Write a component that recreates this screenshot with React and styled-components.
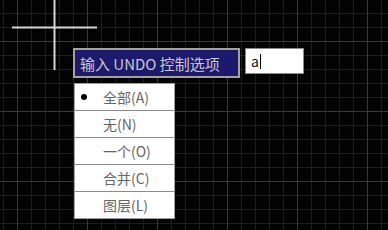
import React from 'react';
import styled, { createGlobalStyle } from 'styled-components';

const GlobalStyle = createGlobalStyle`
  html, body {
    margin: 0;
    padding: 0;
    background: #000;
  }
`;

const options = ['全部(A)', '无(N)', '一个(O)', '合并(C)', '图层(L)'];

export default function App() {
  return (
    <Canvas>
      <GlobalStyle />
      <Crosshair width="100" height="80" viewBox="0 0 100 80">
        <line x1="54.5" y1="0" x2="54.5" y2="70" stroke="#d6d6d6" strokeWidth="2" />
        <line x1="12" y1="27.5" x2="97" y2="27.5" stroke="#d6d6d6" strokeWidth="2" />
      </Crosshair>
      <PromptRow>
        <Prompt>输入 UNDO 控制选项</Prompt>
        <InputBox>
          a<Caret />
        </InputBox>
      </PromptRow>
      <Menu>
        {options.map((label, i) => (
          <Item key={label} last={i === options.length - 1}>
            <Bullet visible={i === 0} />
            {label}
          </Item>
        ))}
      </Menu>
    </Canvas>
  );
}

const Canvas = styled.div`
  position: relative;
  width: 388px;
  height: 230px;
  overflow: hidden;
  box-sizing: border-box;
  padding: 48px 0 0 73px;
  background-color: #030303;
  background-image:
    linear-gradient(to right, #3a3a3a 1px, transparent 1px),
    linear-gradient(to bottom, #3a3a3a 1px, transparent 1px),
    linear-gradient(to right, #1e1e1e 1px, transparent 1px),
    linear-gradient(to bottom, #1e1e1e 1px, transparent 1px);
  background-size: 70px 70px, 70px 70px, 14px 14px, 14px 14px;
  background-position: 17px 0, 0 41px, 3px 0, 0 13px;
  font-family: "Noto Sans CJK SC", "Noto Sans", sans-serif;
`;

const Crosshair = styled.svg`
  position: absolute;
  left: 0;
  top: 0;
`;

const PromptRow = styled.div`
  display: flex;
  align-items: flex-start;
  gap: 5px;
`;

const Prompt = styled.div`
  box-sizing: border-box;
  width: 167px;
  height: 30px;
  display: flex;
  align-items: center;
  padding-left: 5px;
  background: #1d1a6e;
  border: 2px solid #a4a49c;
  color: #c9c9c9;
  font-size: 15px;
  white-space: nowrap;
`;

const InputBox = styled.div`
  box-sizing: border-box;
  width: 59px;
  height: 26px;
  display: flex;
  align-items: center;
  padding-left: 5px;
  background: #fff;
  border: 1px solid #8a8a8a;
  color: #111;
  font-size: 14px;
`;

const Caret = styled.span`
  display: inline-block;
  width: 1px;
  height: 15px;
  margin-left: 1px;
  background: #000;
`;

const Menu = styled.div`
  box-sizing: border-box;
  width: 101px;
  margin-top: 5px;
  margin-left: 1px;
  background: #fff;
  border: 1px solid #a0a0a0;
  display: flex;
  flex-direction: column;
`;

const Item = styled.div`
  height: 26px;
  display: flex;
  align-items: center;
  padding-left: 6px;
  border-bottom: ${p => (p.last ? 'none' : '1px solid #8c8c8c')};
  color: #666;
  font-size: 14px;
`;

const Bullet = styled.span`
  width: 6px;
  height: 6px;
  border-radius: 50%;
  background: ${p => (p.visible ? '#000' : 'transparent')};
  margin-right: 16px;
`;
